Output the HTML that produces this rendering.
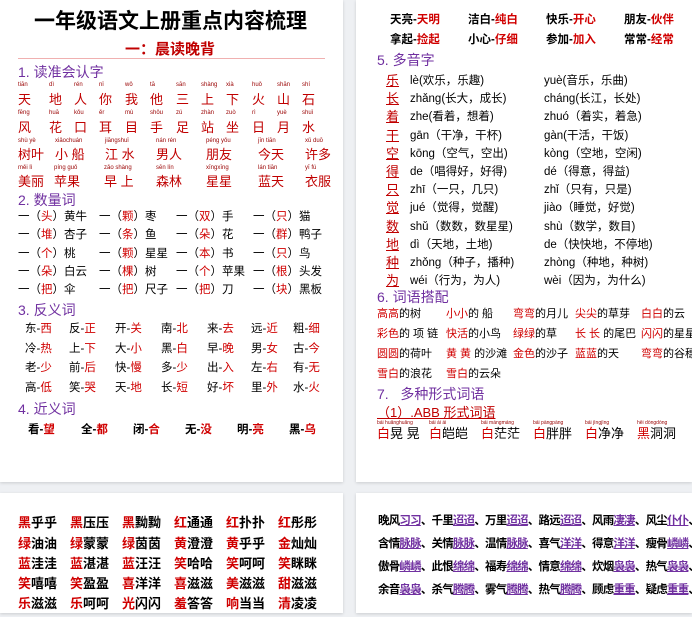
<!DOCTYPE html>
<html><head><meta charset="utf-8"><style>
*{margin:0;padding:0;box-sizing:border-box}
body{width:692px;height:604px;background:#eef0f3;position:relative;overflow:hidden;font-family:"Liberation Sans","Noto Sans CJK SC",sans-serif;color:#000}
.pg{position:absolute;background:#fff;box-shadow:0 1px 3px rgba(0,0,0,.15)}
.a{position:absolute;white-space:nowrap;line-height:1}
.r{color:#d00000}.u{color:#7030a0;text-decoration:underline}
.h{font-size:14px;color:#7030a0}
.c{font-size:13px;color:#c00000}
.q{font-size:11.5px}
.w{font-size:11.5px}
</style></head><body>
<div class="pg" style="left:0;top:0;width:343px;height:482px"></div>
<div class="pg" style="left:356px;top:0;width:336px;height:482px"></div>
<div class="pg" style="left:0;top:493px;width:343px;height:120px"></div>
<div class="pg" style="left:356px;top:493px;width:336px;height:120px"></div>

<div class="a" style="left:34px;top:11px;font-size:21px;font-weight:bold">一年级语文上册重点内容梳理</div>
<div class="a" style="left:125px;top:42px;font-size:15px;font-weight:bold;color:#c00000">一：晨读晚背</div>
<div class="a" style="left:18px;top:58px;width:307px;height:1px;background:#f0b0b0"></div>
<div class="a h" style="left:18px;top:65px">1. 读准会认字</div>

<div class="a" style="left:18px;top:82px;font-size:6px;color:#900;width:320px">
<span style="position:absolute;left:0">tiān</span><span style="position:absolute;left:31px">dì</span><span style="position:absolute;left:56px">rén</span><span style="position:absolute;left:81px">nǐ</span><span style="position:absolute;left:107px">wǒ</span><span style="position:absolute;left:132px">tā</span><span style="position:absolute;left:158px">sān</span><span style="position:absolute;left:183px">shàng</span><span style="position:absolute;left:208px">xià</span><span style="position:absolute;left:234px">huǒ</span><span style="position:absolute;left:259px">shān</span><span style="position:absolute;left:284px">shí</span></div>
<div class="a c" style="left:18px;top:93px">
<span style="position:absolute;left:0">天</span><span style="position:absolute;left:31px">地</span><span style="position:absolute;left:56px">人</span><span style="position:absolute;left:81px">你</span><span style="position:absolute;left:107px">我</span><span style="position:absolute;left:132px">他</span><span style="position:absolute;left:158px">三</span><span style="position:absolute;left:183px">上</span><span style="position:absolute;left:208px">下</span><span style="position:absolute;left:234px">火</span><span style="position:absolute;left:259px">山</span><span style="position:absolute;left:284px">石</span></div>
<div class="a" style="left:18px;top:110px;font-size:6px;color:#900">
<span style="position:absolute;left:0">fēng</span><span style="position:absolute;left:31px">huā</span><span style="position:absolute;left:56px">kǒu</span><span style="position:absolute;left:81px">ěr</span><span style="position:absolute;left:107px">mù</span><span style="position:absolute;left:132px">shǒu</span><span style="position:absolute;left:158px">zú</span><span style="position:absolute;left:183px">zhàn</span><span style="position:absolute;left:208px">zuò</span><span style="position:absolute;left:234px">rì</span><span style="position:absolute;left:259px">yuè</span><span style="position:absolute;left:284px">shuǐ</span></div>
<div class="a c" style="left:18px;top:121px">
<span style="position:absolute;left:0">风</span><span style="position:absolute;left:31px">花</span><span style="position:absolute;left:56px">口</span><span style="position:absolute;left:81px">耳</span><span style="position:absolute;left:107px">目</span><span style="position:absolute;left:132px">手</span><span style="position:absolute;left:158px">足</span><span style="position:absolute;left:183px">站</span><span style="position:absolute;left:208px">坐</span><span style="position:absolute;left:234px">日</span><span style="position:absolute;left:259px">月</span><span style="position:absolute;left:284px">水</span></div>
<div class="a" style="left:18px;top:138px;font-size:6px;color:#900">
<span style="position:absolute;left:0">shù yè</span><span style="position:absolute;left:37px">xiǎochuán</span><span style="position:absolute;left:87px">jiāngshuǐ</span><span style="position:absolute;left:138px">nán rén</span><span style="position:absolute;left:188px">péng yǒu</span><span style="position:absolute;left:240px">jīn tiān</span><span style="position:absolute;left:287px">xǔ duō</span></div>
<div class="a c" style="left:18px;top:148px">
<span style="position:absolute;left:0">树叶</span><span style="position:absolute;left:37px">小 船</span><span style="position:absolute;left:87px">江 水</span><span style="position:absolute;left:138px">男人</span><span style="position:absolute;left:188px">朋友</span><span style="position:absolute;left:240px">今天</span><span style="position:absolute;left:287px">许多</span></div>
<div class="a" style="left:18px;top:165px;font-size:6px;color:#900">
<span style="position:absolute;left:0">měi lì</span><span style="position:absolute;left:36px">píng guǒ</span><span style="position:absolute;left:86px">zǎo shàng</span><span style="position:absolute;left:138px">sēn lín</span><span style="position:absolute;left:188px">xīngxīng</span><span style="position:absolute;left:240px">lán tiān</span><span style="position:absolute;left:287px">yī fú</span></div>
<div class="a c" style="left:18px;top:175px">
<span style="position:absolute;left:0">美丽</span><span style="position:absolute;left:36px">苹果</span><span style="position:absolute;left:86px">早 上</span><span style="position:absolute;left:138px">森林</span><span style="position:absolute;left:188px">星星</span><span style="position:absolute;left:240px">蓝天</span><span style="position:absolute;left:287px">衣服</span></div>

<div class="a h" style="left:18px;top:193px">2. 数量词</div>
<div class="a q" style="left:18px;top:212px"><span style="position:absolute;left:0">一（<span class="r">头</span>）黄牛</span><span style="position:absolute;left:81px">一（<span class="r">颗</span>）枣</span><span style="position:absolute;left:158px">一（<span class="r">双</span>）手</span><span style="position:absolute;left:235px">一（<span class="r">只</span>）猫</span></div>
<div class="a q" style="left:18px;top:230px"><span style="position:absolute;left:0">一（<span class="r">堆</span>）杏子</span><span style="position:absolute;left:81px">一（<span class="r">条</span>）鱼</span><span style="position:absolute;left:158px">一（<span class="r">朵</span>）花</span><span style="position:absolute;left:235px">一（<span class="r">群</span>）鸭子</span></div>
<div class="a q" style="left:18px;top:249px"><span style="position:absolute;left:0">一（<span class="r">个</span>）桃</span><span style="position:absolute;left:81px">一（<span class="r">颗</span>）星星</span><span style="position:absolute;left:158px">一（<span class="r">本</span>）书</span><span style="position:absolute;left:235px">一（<span class="r">只</span>）鸟</span></div>
<div class="a q" style="left:18px;top:267px"><span style="position:absolute;left:0">一（<span class="r">朵</span>）白云</span><span style="position:absolute;left:81px">一（<span class="r">棵</span>）树</span><span style="position:absolute;left:158px">一（<span class="r">个</span>）苹果</span><span style="position:absolute;left:235px">一（<span class="r">根</span>）头发</span></div>
<div class="a q" style="left:18px;top:285px"><span style="position:absolute;left:0">一（<span class="r">把</span>）伞</span><span style="position:absolute;left:81px">一（<span class="r">把</span>）尺子</span><span style="position:absolute;left:158px">一（<span class="r">把</span>）刀</span><span style="position:absolute;left:235px">一（<span class="r">块</span>）黑板</span></div>

<div class="a h" style="left:18px;top:303px">3. 反义词</div>
<div class="a q" style="left:25px;top:324px"><span style="position:absolute;left:0">东-<span class="r">西</span></span><span style="position:absolute;left:44px">反-<span class="r">正</span></span><span style="position:absolute;left:90px">开-<span class="r">关</span></span><span style="position:absolute;left:136px">南-<span class="r">北</span></span><span style="position:absolute;left:182px">来-<span class="r">去</span></span><span style="position:absolute;left:226px">远-<span class="r">近</span></span><span style="position:absolute;left:268px">粗-<span class="r">细</span></span></div>
<div class="a q" style="left:25px;top:344px"><span style="position:absolute;left:0">冷-<span class="r">热</span></span><span style="position:absolute;left:44px">上-<span class="r">下</span></span><span style="position:absolute;left:90px">大-<span class="r">小</span></span><span style="position:absolute;left:136px">黑-<span class="r">白</span></span><span style="position:absolute;left:182px">早-<span class="r">晚</span></span><span style="position:absolute;left:226px">男-<span class="r">女</span></span><span style="position:absolute;left:268px">古-<span class="r">今</span></span></div>
<div class="a q" style="left:25px;top:363px"><span style="position:absolute;left:0">老-<span class="r">少</span></span><span style="position:absolute;left:44px">前-<span class="r">后</span></span><span style="position:absolute;left:90px">快-<span class="r">慢</span></span><span style="position:absolute;left:136px">多-<span class="r">少</span></span><span style="position:absolute;left:182px">出-<span class="r">入</span></span><span style="position:absolute;left:226px">左-<span class="r">右</span></span><span style="position:absolute;left:268px">有-<span class="r">无</span></span></div>
<div class="a q" style="left:25px;top:383px"><span style="position:absolute;left:0">高-<span class="r">低</span></span><span style="position:absolute;left:44px">笑-<span class="r">哭</span></span><span style="position:absolute;left:90px">天-<span class="r">地</span></span><span style="position:absolute;left:136px">长-<span class="r">短</span></span><span style="position:absolute;left:182px">好-<span class="r">坏</span></span><span style="position:absolute;left:226px">里-<span class="r">外</span></span><span style="position:absolute;left:268px">水-<span class="r">火</span></span></div>

<div class="a h" style="left:18px;top:402px">4. 近义词</div>
<div class="a w" style="left:28px;top:425px;font-weight:bold"><span style="position:absolute;left:0">看-<span class="r">望</span></span><span style="position:absolute;left:53px">全-<span class="r">都</span></span><span style="position:absolute;left:105px">闭-<span class="r">合</span></span><span style="position:absolute;left:157px">无-<span class="r">没</span></span><span style="position:absolute;left:209px">明-<span class="r">亮</span></span><span style="position:absolute;left:261px">黑-<span class="r">乌</span></span></div>

<!-- right page -->
<div class="a w" style="left:390px;top:15px;font-weight:bold"><span style="position:absolute;left:0">天亮-<span class="r">天明</span></span><span style="position:absolute;left:78px">洁白-<span class="r">纯白</span></span><span style="position:absolute;left:156px">快乐-<span class="r">开心</span></span><span style="position:absolute;left:234px">朋友-<span class="r">伙伴</span></span></div>
<div class="a w" style="left:390px;top:35px;font-weight:bold"><span style="position:absolute;left:0">拿起-<span class="r">捡起</span></span><span style="position:absolute;left:78px">小心-<span class="r">仔细</span></span><span style="position:absolute;left:156px">参加-<span class="r">加入</span></span><span style="position:absolute;left:234px">常常-<span class="r">经常</span></span></div>
<div class="a h" style="left:377px;top:53px">5. 多音字</div>
<div class="a" style="left:386px;top:72px;font-size:11.5px;line-height:18.2px;white-space:normal;width:300px">
<div style="position:relative;height:18.2px"><span class="c" style="position:absolute;left:0;text-decoration:underline">乐</span><span style="position:absolute;left:24px">lè(欢乐，乐趣)</span><span style="position:absolute;left:158px">yuè(音乐，乐曲)</span></div>
<div style="position:relative;height:18.2px"><span class="c" style="position:absolute;left:0;text-decoration:underline">长</span><span style="position:absolute;left:24px">zhǎng(长大，成长)</span><span style="position:absolute;left:158px">cháng(长江，长处)</span></div>
<div style="position:relative;height:18.2px"><span class="c" style="position:absolute;left:0;text-decoration:underline">着</span><span style="position:absolute;left:24px">zhe(看着，想着)</span><span style="position:absolute;left:158px">zhuó（着实，着急)</span></div>
<div style="position:relative;height:18.2px"><span class="c" style="position:absolute;left:0;text-decoration:underline">干</span><span style="position:absolute;left:24px">gān（干净，干杯)</span><span style="position:absolute;left:158px">gàn(干活，干饭)</span></div>
<div style="position:relative;height:18.2px"><span class="c" style="position:absolute;left:0;text-decoration:underline">空</span><span style="position:absolute;left:24px">kōng（空气，空出)</span><span style="position:absolute;left:158px">kòng（空地，空闲)</span></div>
<div style="position:relative;height:18.2px"><span class="c" style="position:absolute;left:0;text-decoration:underline">得</span><span style="position:absolute;left:24px">de（唱得好，好得)</span><span style="position:absolute;left:158px">dé（得意，得益)</span></div>
<div style="position:relative;height:18.2px"><span class="c" style="position:absolute;left:0;text-decoration:underline">只</span><span style="position:absolute;left:24px">zhī（一只，几只)</span><span style="position:absolute;left:158px">zhǐ（只有，只是)</span></div>
<div style="position:relative;height:18.2px"><span class="c" style="position:absolute;left:0;text-decoration:underline">觉</span><span style="position:absolute;left:24px">jué（觉得，觉醒)</span><span style="position:absolute;left:158px">jiào（睡觉，好觉)</span></div>
<div style="position:relative;height:18.2px"><span class="c" style="position:absolute;left:0;text-decoration:underline">数</span><span style="position:absolute;left:24px">shǔ（数数，数星星)</span><span style="position:absolute;left:158px">shù（数学，数目)</span></div>
<div style="position:relative;height:18.2px"><span class="c" style="position:absolute;left:0;text-decoration:underline">地</span><span style="position:absolute;left:24px">dì（天地，土地)</span><span style="position:absolute;left:158px">de（快快地，不停地)</span></div>
<div style="position:relative;height:18.2px"><span class="c" style="position:absolute;left:0;text-decoration:underline">种</span><span style="position:absolute;left:24px">zhǒng（种子，播种)</span><span style="position:absolute;left:158px">zhòng（种地，种树)</span></div>
<div style="position:relative;height:18.2px"><span class="c" style="position:absolute;left:0;text-decoration:underline">为</span><span style="position:absolute;left:24px">wéi（行为，为人)</span><span style="position:absolute;left:158px">wèi（因为，为什么)</span></div>
</div>
<div class="a h" style="left:377px;top:290px">6. 词语搭配</div>
<div style="position:absolute;left:377px;top:300px;width:315px;height:90px;overflow:hidden;font-size:11px">
<div class="a" style="left:0;top:9px"><span style="position:absolute;left:0"><span class="r">高高</span>的树</span><span style="position:absolute;left:69px"><span class="r">小小</span>的 船</span><span style="position:absolute;left:136px"><span class="r">弯弯</span>的月儿</span><span style="position:absolute;left:198px"><span class="r">尖尖</span>的草芽</span><span style="position:absolute;left:264px"><span class="r">白白</span>的云</span></div>
<div class="a" style="left:0;top:29px"><span style="position:absolute;left:0"><span class="r">彩色</span>的 项 链</span><span style="position:absolute;left:69px"><span class="r">快活</span>的小鸟</span><span style="position:absolute;left:136px"><span class="r">绿绿</span>的草</span><span style="position:absolute;left:198px"><span class="r">长 长</span> 的尾巴</span><span style="position:absolute;left:264px"><span class="r">闪闪</span>的星星</span></div>
<div class="a" style="left:0;top:49px"><span style="position:absolute;left:0"><span class="r">圆圆</span>的荷叶</span><span style="position:absolute;left:69px"><span class="r">黄 黄</span> 的沙滩</span><span style="position:absolute;left:136px"><span class="r">金色</span>的沙子</span><span style="position:absolute;left:198px"><span class="r">蓝蓝</span>的天</span><span style="position:absolute;left:264px"><span class="r">弯弯</span>的谷穗</span></div>
<div class="a" style="left:0;top:69px"><span style="position:absolute;left:0"><span class="r">雪白</span>的浪花</span><span style="position:absolute;left:69px"><span class="r">雪白</span>的云朵</span></div>
</div>
<div class="a h" style="left:377px;top:387px">7.&nbsp;&nbsp;&nbsp;多种形式词语</div>
<div class="a" style="left:377px;top:406px;font-size:13px;color:#c00000;text-decoration:underline">（1）.ABB 形式词语</div>
<div class="a" style="left:377px;top:421px;font-size:5px;color:#900"><span style="position:absolute;left:0">bái huǎnghuǎng</span><span style="position:absolute;left:52px">bái ái ái</span><span style="position:absolute;left:104px">bái mángmáng</span><span style="position:absolute;left:156px">bái pàngpàng</span><span style="position:absolute;left:208px">bái jìngjìng</span><span style="position:absolute;left:260px">hēi dòngdòng</span></div>
<div class="a" style="left:377px;top:427px;font-size:13px"><span style="position:absolute;left:0"><span class="r">白</span>晃 晃</span><span style="position:absolute;left:52px"><span class="r">白</span>皑皑</span><span style="position:absolute;left:104px"><span class="r">白</span>茫茫</span><span style="position:absolute;left:156px"><span class="r">白</span>胖胖</span><span style="position:absolute;left:208px"><span class="r">白</span>净净</span><span style="position:absolute;left:260px"><span class="r">黑</span>洞洞</span></div>

<!-- bottom left -->
<div class="a" style="left:18px;top:516px;font-size:13px;font-weight:bold">
<div style="position:relative;height:21px"><span style="position:absolute;left:0"><span class="r">黑</span>乎乎</span><span style="position:absolute;left:52px"><span class="r">黑</span>压压</span><span style="position:absolute;left:104px"><span class="r">黑</span>黝黝</span><span style="position:absolute;left:156px"><span class="r">红</span>通通</span><span style="position:absolute;left:208px"><span class="r">红</span>扑扑</span><span style="position:absolute;left:260px"><span class="r">红</span>彤彤</span></div>
<div style="position:relative;height:20px"><span style="position:absolute;left:0"><span class="r">绿</span>油油</span><span style="position:absolute;left:52px"><span class="r">绿</span>蒙蒙</span><span style="position:absolute;left:104px"><span class="r">绿</span>茵茵</span><span style="position:absolute;left:156px"><span class="r">黄</span>澄澄</span><span style="position:absolute;left:208px"><span class="r">黄</span>乎乎</span><span style="position:absolute;left:260px"><span class="r">金</span>灿灿</span></div>
<div style="position:relative;height:20px"><span style="position:absolute;left:0"><span class="r">蓝</span>洼洼</span><span style="position:absolute;left:52px"><span class="r">蓝</span>湛湛</span><span style="position:absolute;left:104px"><span class="r">蓝</span>汪汪</span><span style="position:absolute;left:156px"><span class="r">笑</span>哈哈</span><span style="position:absolute;left:208px"><span class="r">笑</span>呵呵</span><span style="position:absolute;left:260px"><span class="r">笑</span>眯眯</span></div>
<div style="position:relative;height:20px"><span style="position:absolute;left:0"><span class="r">笑</span>嘻嘻</span><span style="position:absolute;left:52px"><span class="r">笑</span>盈盈</span><span style="position:absolute;left:104px"><span class="r">喜</span>洋洋</span><span style="position:absolute;left:156px"><span class="r">喜</span>滋滋</span><span style="position:absolute;left:208px"><span class="r">美</span>滋滋</span><span style="position:absolute;left:260px"><span class="r">甜</span>滋滋</span></div>
<div style="position:relative;height:20px"><span style="position:absolute;left:0"><span class="r">乐</span>滋滋</span><span style="position:absolute;left:52px"><span class="r">乐</span>呵呵</span><span style="position:absolute;left:104px"><span class="r">光</span>闪闪</span><span style="position:absolute;left:156px"><span class="r">羞</span>答答</span><span style="position:absolute;left:208px"><span class="r">响</span>当当</span><span style="position:absolute;left:260px"><span class="r">清</span>凌凌</span></div>
</div>

<!-- bottom right -->
<div style="position:absolute;left:378px;top:510px;width:314px;height:94px;overflow:hidden;font-size:11.5px;font-weight:bold;line-height:23px;white-space:nowrap;letter-spacing:-0.8px">
<div>晚风<span class="u">习习</span>、千里<span class="u">迢迢</span>、万里<span class="u">迢迢</span>、路远<span class="u">迢迢</span>、风雨<span class="u">凄凄</span>、风尘<span class="u">仆仆</span>、</div>
<div>含情<span class="u">脉脉</span>、关情<span class="u">脉脉</span>、温情<span class="u">脉脉</span>、喜气<span class="u">洋洋</span>、得意<span class="u">洋洋</span>、瘦骨<span class="u">嶙嶙</span>、</div>
<div>傲骨<span class="u">嶙嶙</span>、此恨<span class="u">绵绵</span>、福寿<span class="u">绵绵</span>、情意<span class="u">绵绵</span>、炊烟<span class="u">袅袅</span>、热气<span class="u">袅袅</span>、</div>
<div>余音<span class="u">袅袅</span>、杀气<span class="u">腾腾</span>、雾气<span class="u">腾腾</span>、热气<span class="u">腾腾</span>、顾虑<span class="u">重重</span>、疑虑<span class="u">重重</span>、</div>
</div>
</body></html>
